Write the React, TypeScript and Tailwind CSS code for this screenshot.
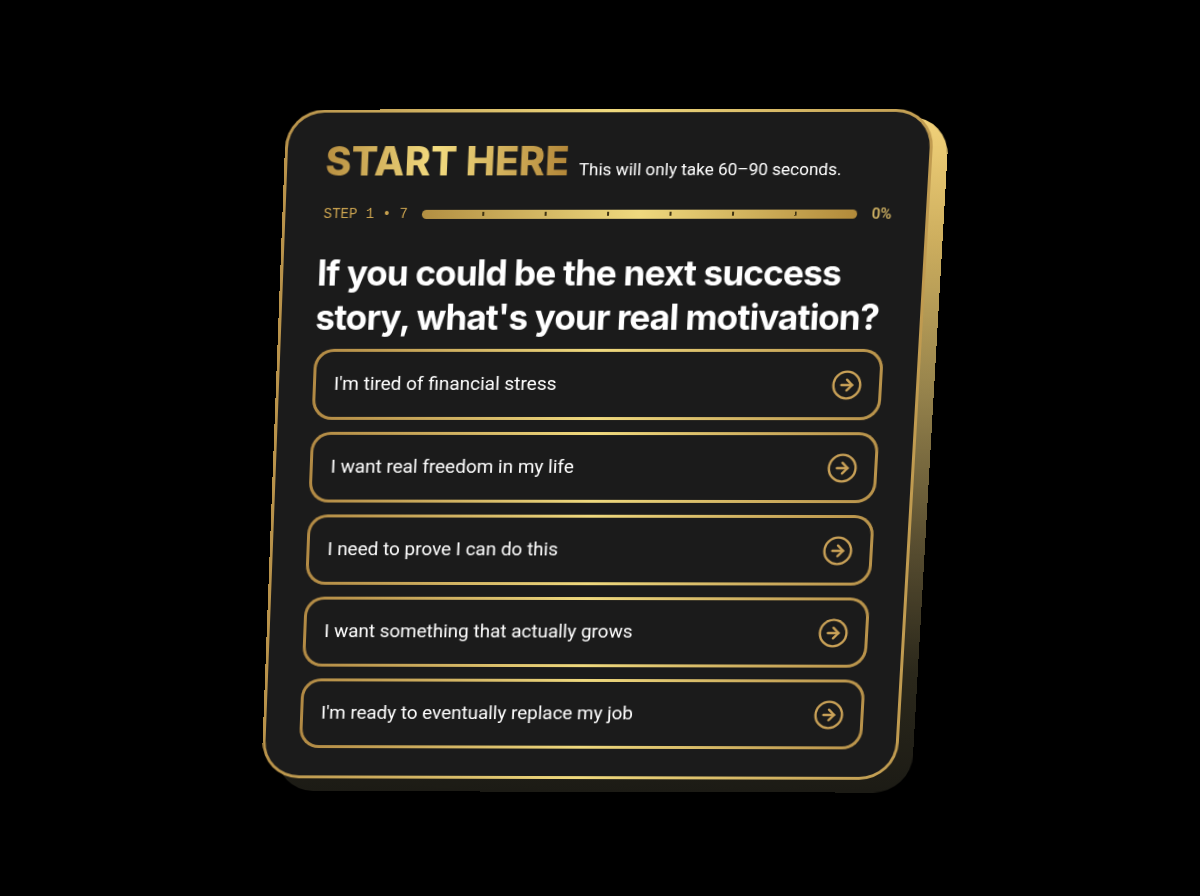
import { clsx } from "clsx";
import { CircleArrowRight } from "lucide-react";

const options = [
  "I'm tired of financial stress",
  "I want real freedom in my life",
  "I need to prove I can do this",
  "I want something that actually grows",
  "I'm ready to eventually replace my job",
];

const totalSteps = 7;

const ProgressBar = () => {
  return (
    <div
      role="progressbar"
      aria-label="Quiz progress"
      aria-valuenow={0}
      aria-valuemin={0}
      aria-valuemax={100}
      className="flex h-[9px] flex-1 items-center rounded-full bg-[linear-gradient(90deg,#b28f42,#efd97e_50%,#b28a3a)]"
    >
      {Array.from({ length: totalSteps }, (_, index) => (
        <span
          key={index}
          className={clsx(
            "h-1 flex-1",
            index < totalSteps - 1 && "border-r-2 border-[#3f3312]"
          )}
        />
      ))}
    </div>
  );
};

const App = () => {
  return (
    <main className="flex min-h-screen items-center justify-center bg-black pt-8 pr-3 pb-[34px] font-['Inter',sans-serif] text-white">
      <section className="relative w-full max-w-[642px] [transform:perspective(2000px)_rotateX(-3.4deg)_rotateY(-0.7deg)_skewX(-2.7deg)]">
        {/* side of the slab */}
        <div className="absolute top-2 -right-[15px] -bottom-[13px] left-[15px] rounded-[38px] bg-[linear-gradient(180deg,#f2d27a,#cdae5e_18%,#96834c_40%,#5a4f31_62%,#2b281b_82%,#1c1b15)]" />

        <div className="relative rounded-[38px] border-[3px] border-transparent [background:linear-gradient(#1b1b1b,#1b1b1b)_padding-box,linear-gradient(90deg,#b8924a,#efd97e_50%,#c09b50)_border-box] px-[34px] pt-[26px] pb-7">
          <header className="flex items-baseline gap-[10px] px-1">
            <h1 className="bg-[linear-gradient(90deg,#b88f40,#f3dc80_45%,#b28638)] bg-clip-text text-[39px] leading-[44px] font-extrabold whitespace-nowrap text-transparent">
              START HERE
            </h1>
            <p className="font-['Roboto',sans-serif] text-[17px] leading-6 whitespace-nowrap">
              This will only take 60–90 seconds.
            </p>
          </header>

          <div className="mt-5 flex items-center gap-[14px] pl-1 text-[#c9a24f]">
            <span className="font-['Liberation_Mono',monospace] text-[14px] leading-5 whitespace-nowrap">
              STEP 1 • 7
            </span>
            <ProgressBar />
            <span className="font-['Roboto',sans-serif] text-[15px] leading-5 font-medium text-[#dcbc68]">
              0%
            </span>
          </div>

          <h2 className="mt-[26px] text-[35px] leading-[44px] font-bold tracking-tight">
            If you could be the next success story, what's your real motivation?
          </h2>

          <div className="mt-[10px] flex flex-col gap-3">
            {options.map((option) => (
              <button
                key={option}
                type="button"
                className="flex h-[71px] items-center justify-between rounded-[20px] border-[3px] border-transparent [background:linear-gradient(#1b1b1b,#1b1b1b)_padding-box,linear-gradient(90deg,#b28a44,#efd97e_50%,#b8924a)_border-box] pr-4 pl-[18px] text-left font-['Roboto',sans-serif] text-[19px]"
              >
                {option}
                <CircleArrowRight className="size-8 text-[#c9a157]" strokeWidth={1.8} />
              </button>
            ))}
          </div>
        </div>
      </section>
    </main>
  );
};

export default App;
